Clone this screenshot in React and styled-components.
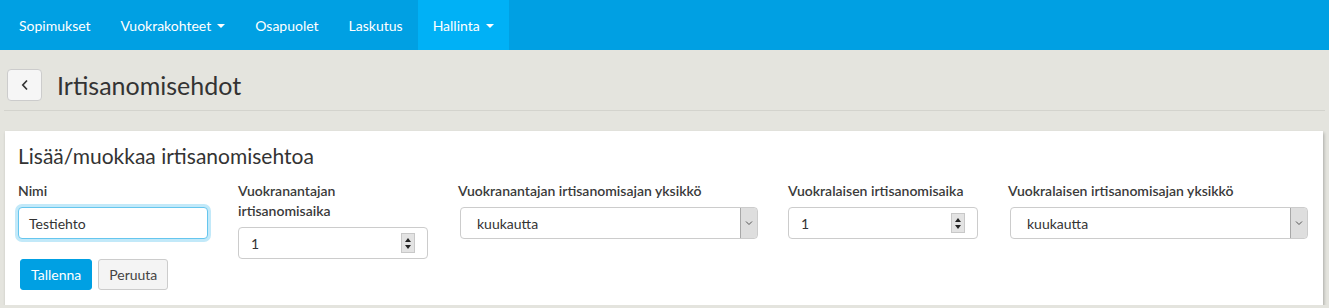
import React from "react";
import styled, { createGlobalStyle } from "styled-components";

const GlobalStyle = createGlobalStyle`
  html, body {
    margin: 0;
    padding: 0;
    background: #e4e4de;
    font-family: "Lato", "Noto Sans", sans-serif;
    color: #333;
  }
  * { box-sizing: border-box; }
`;

const NavBar = styled.nav`
  height: 50px;
  background: #00a0e3;
  display: flex;
  align-items: stretch;
  padding-left: 4px;
`;

const NavItem = styled.div`
  display: flex;
  align-items: center;
  padding: 0 15px;
  color: #fff;
  font-size: 14px;
  background: ${(p) => (p.active ? "#00b1f6" : "transparent")};
`;

const Caret = styled.span`
  display: inline-block;
  margin-left: 6px;
  margin-top: 2px;
  border-top: 4px solid #fff;
  border-left: 4px solid transparent;
  border-right: 4px solid transparent;
`;

const Page = styled.div`
  padding: 0 5px;
`;

const Header = styled.div`
  display: flex;
  align-items: flex-start;
  gap: 15px;
  padding: 19px 0 0 3px;
  height: 61px;
  border-bottom: 1px solid #d3d3cd;
  margin: 0 -1px 20px -1px;
`;

const BackButton = styled.button`
  width: 35px;
  height: 32px;
  background: #f6f6f6;
  border: 1px solid #ccc;
  border-radius: 4px;
  display: flex;
  align-items: center;
  justify-content: center;
  padding: 0;
`;

const Title = styled.h1`
  margin: 0;
  font-size: 25px;
  line-height: 32px;
  font-weight: 400;
  color: #333;
`;

const Panel = styled.section`
  background: #fff;
  width: 1318px;
  padding: 12px 13px 15px 13px;
  box-shadow: 1px 2px 3px rgba(0, 0, 0, 0.25);
`;

const PanelTitle = styled.h2`
  margin: 0 0 12px 0;
  font-size: 21px;
  font-weight: 400;
  line-height: 26px;
  color: #333;
`;

const FieldRow = styled.div`
  display: grid;
  grid-template-columns: 190px 190px 300px 190px 300px;
  column-gap: 30px;
  align-items: start;
`;

const Field = styled.div`
  display: flex;
  flex-direction: column;
`;

const Label = styled.label`
  font-size: 14px;
  font-weight: 600;
  line-height: 20px;
  color: #3a3a3a;
  margin-bottom: 6px;
`;

const TextBox = styled.div`
  height: 32px;
  border: 1px solid ${(p) => (p.focused ? "#66c6ee" : "#ccc")};
  border-radius: 4px;
  box-shadow: ${(p) => (p.focused ? "0 0 0 3px #c2e9f9" : "none")};
  display: flex;
  align-items: center;
  padding: 0 0 0 ${(p) => p.pad || 10}px;
  font-size: 14px;
  color: #333;
  background: #fff;
`;

const BoxText = styled.span`
  flex: 1;
  display: flex;
  align-items: center;
`;

const Spinner = styled.span`
  width: 14px;
  height: 20px;
  margin-right: 12px;
  background: #e3e3e3;
  border: 1px solid #c8c8c8;
  display: flex;
  flex-direction: column;
  align-items: center;
  justify-content: space-around;
  padding: 2px 0;
`;

const TriUp = styled.span`
  border-bottom: 4px solid #222;
  border-left: 3px solid transparent;
  border-right: 3px solid transparent;
`;

const TriDown = styled.span`
  border-top: 4px solid #222;
  border-left: 3px solid transparent;
  border-right: 3px solid transparent;
`;

const SelectBox = styled(TextBox)`
  align-items: stretch;
  padding-left: 16px;
  margin-left: 2px;
  overflow: hidden;
`;

const SelectArrow = styled.span`
  width: 18px;
  background: #dedede;
  border: 1px solid #a8a8a8;
  border-radius: 0 3px 3px 0;
  margin: -1px -1px -1px 0;
  display: flex;
  align-items: center;
  justify-content: center;
`;

const ButtonRow = styled.div`
  display: flex;
  gap: 6px;
  margin-top: 20px;
  padding-left: 2px;
`;

const Button = styled.button`
  height: 31px;
  padding: 0 10px;
  font-family: inherit;
  font-size: 14px;
  border-radius: 3px;
  border: 1px solid ${(p) => (p.primary ? "#00a0e3" : "#ccc")};
  background: ${(p) => (p.primary ? "#00a0e3" : "#f4f4f4")};
  color: ${(p) => (p.primary ? "#fff" : "#444")};
`;

const Chevron = () => (
  <svg width="12" height="14" viewBox="0 0 12 14" fill="none">
    <path d="M8 2.5 L3.8 7 L8 11.5" stroke="#333" strokeWidth="1.7" />
  </svg>
);

const NumberInput = ({ value }) => (
  <TextBox pad={12}>
    <BoxText>{value}</BoxText>
    <Spinner>
      <TriUp />
      <TriDown />
    </Spinner>
  </TextBox>
);

const Select = ({ value }) => (
  <SelectBox>
    <BoxText>{value}</BoxText>
    <SelectArrow>
      <svg width="8" height="6" viewBox="0 0 8 6" fill="none">
        <path d="M1 1.5 L4 4.5 L7 1.5" stroke="#555" strokeWidth="1" />
      </svg>
    </SelectArrow>
  </SelectBox>
);

export default function App() {
  return (
    <>
      <GlobalStyle />
      <NavBar>
        <NavItem>Sopimukset</NavItem>
        <NavItem>
          Vuokrakohteet <Caret />
        </NavItem>
        <NavItem>Osapuolet</NavItem>
        <NavItem>Laskutus</NavItem>
        <NavItem active>
          Hallinta <Caret />
        </NavItem>
      </NavBar>
      <Page>
        <Header>
          <BackButton aria-label="Takaisin">
            <Chevron />
          </BackButton>
          <Title>Irtisanomisehdot</Title>
        </Header>
        <Panel>
          <PanelTitle>Lisää/muokkaa irtisanomisehtoa</PanelTitle>
          <FieldRow>
            <Field>
              <Label>Nimi</Label>
              <TextBox focused>Testiehto</TextBox>
              <ButtonRow>
                <Button primary>Tallenna</Button>
                <Button>Peruuta</Button>
              </ButtonRow>
            </Field>
            <Field>
              <Label>
                Vuokranantajan
                <br />
                irtisanomisaika
              </Label>
              <NumberInput value="1" />
            </Field>
            <Field>
              <Label>Vuokranantajan irtisanomisajan yksikkö</Label>
              <Select value="kuukautta" />
            </Field>
            <Field>
              <Label>Vuokralaisen irtisanomisaika</Label>
              <NumberInput value="1" />
            </Field>
            <Field>
              <Label>Vuokralaisen irtisanomisajan yksikkö</Label>
              <Select value="kuukautta" />
            </Field>
          </FieldRow>
        </Panel>
      </Page>
    </>
  );
}
